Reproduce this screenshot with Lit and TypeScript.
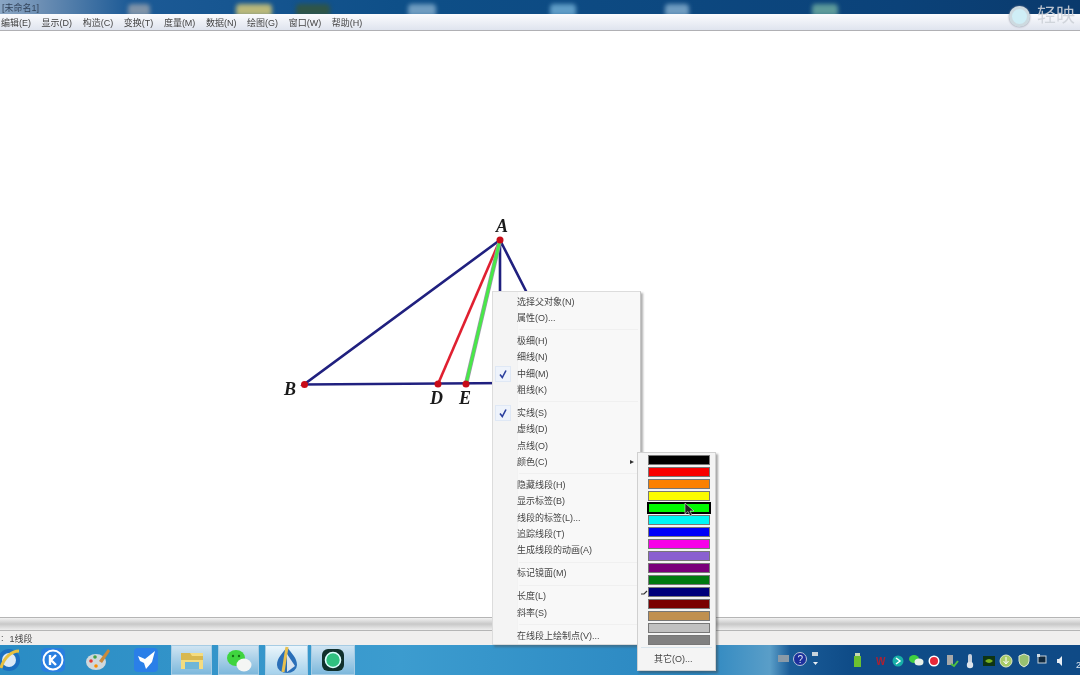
import { LitElement, html, css, svg } from "lit";
import { customElement } from "lit/decorators.js";

const MENUS = ["编辑(E)", "显示(D)", "构造(C)", "变换(T)", "度量(M)", "数据(N)", "绘图(G)", "窗口(W)", "帮助(H)"];

// groups of the context menu, a separator goes between groups
const GROUPS = [
  [{ t: "选择父对象(N)" }, { t: "属性(O)..." }],
  [{ t: "极细(H)" }, { t: "细线(N)" }, { t: "中细(M)", check: true }, { t: "粗线(K)" }],
  [{ t: "实线(S)", check: true }, { t: "虚线(D)" }, { t: "点线(O)" }, { t: "颜色(C)", sub: true }],
  [{ t: "隐藏线段(H)" }, { t: "显示标签(B)" }, { t: "线段的标签(L)..." }, { t: "追踪线段(T)" }, { t: "生成线段的动画(A)" }],
  [{ t: "标记镜面(M)" }],
  [{ t: "长度(L)" }, { t: "斜率(S)" }],
  [{ t: "在线段上绘制点(V)..." }],
];

const COLORS = ["#000000", "#f80000", "#fb8000", "#fbfb00", "#00fb00", "#00f6f6", "#0000f8", "#f800e8", "#8a60d0", "#7a007a", "#007a10", "#00007a", "#7a0000", "#c09050", "#c0c0c0", "#808080"];

const BLOBS = [
  [128, 22, "#7f93a8"],
  [236, 36, "#b9b87a"],
  [296, 34, "#2f5548"],
  [408, 28, "#6f9cc0"],
  [550, 26, "#5f9cc6"],
  [665, 24, "#6f9cc0"],
  [812, 26, "#5d9a9a"],
];

const TASK_ICONS = [
  { x: -4, icon: svg`<circle cx="13" cy="13" r="11" fill="#1c6fc0"/><rect x="6" y="6" width="14" height="14" rx="7" fill="#fff" fill-opacity=".85"/><path d="M5 21C8 10 16 4 23 4" fill="none" stroke="#e8c040" stroke-width="3"/>` },
  { x: 40, icon: svg`<rect x="1" y="1" width="24" height="24" rx="5" fill="#2a7fe0"/><circle cx="13" cy="13" r="9.5" fill="none" stroke="#fff" stroke-width="2"/><path d="M10 8v10M16 8l-5 5 5 5" fill="none" stroke="#fff" stroke-width="2.4"/>` },
  { x: 85, icon: svg`<ellipse cx="11" cy="15" rx="10" ry="8" fill="#cfd8dc"/><circle cx="6" cy="14" r="1.8" fill="#e53935"/><circle cx="10" cy="10" r="1.8" fill="#43a047"/><circle cx="11" cy="19" r="1.8" fill="#fb8c00"/><path d="M14 14L23 2l2 2-8 12z" fill="#c98a3c"/>` },
  { x: 133, icon: svg`<rect x="1" y="1" width="24" height="24" rx="4" fill="#2a7fe8"/><path d="M5 9l7 3 10-8-3 11-6 7-2-6-4-2z" fill="#fff"/>` },
];

@customElement("app-root")
export class AppRoot extends LitElement {
  static styles = css`
    :host {
      display: block;
      width: 1080px;
      height: 675px;
      position: relative;
      overflow: hidden;
      background: #fff;
      font-family: "Liberation Sans", "Noto Sans CJK SC", sans-serif;
      font-size: 9px;
      color: #444;
    }
    .page { display: flex; flex-direction: column; height: 100%; filter: blur(0.4px); }
    .title {
      height: 14px;
      flex: none;
      background: linear-gradient(90deg, #8aa6c4 0, #6d8fb4 40px, #1c5a96 130px, #0e4f88 400px, #0b4279 900px, #0a3a6c 100%);
      display: flex;
      align-items: center;
      padding-left: 2px;
      color: #33445a;
      position: relative;
      overflow: hidden;
    }
    .blob { position: absolute; top: 4px; height: 12px; border-radius: 4px 4px 0 0; filter: blur(2px); }
    .menubar {
      height: 17px;
      flex: none;
      display: flex;
      align-items: center;
      padding-left: 1px;
      gap: 10.6px;
      background: linear-gradient(#fbfcfe, #dfe4ee);
      border-bottom: 1px solid #b0b0b4;
      box-sizing: border-box;
    }
    .canvas { flex: 1; position: relative; background: #fff; }
    .canvas svg { position: absolute; inset: 0; }
    .lbl { font: italic bold 18px "Liberation Serif", serif; fill: #1a1a1a; }
    .scroll {
      height: 14px;
      flex: none;
      box-sizing: border-box;
      border-top: 1px solid #b5b5b5;
      border-bottom: 1px solid #b5b5b5;
      background: linear-gradient(#f2f2f2, #c8c8c8 50%, #eeeeee);
    }
    .status {
      height: 14px;
      flex: none;
      background: #f0efee;
      display: flex;
      align-items: center;
      gap: 6px;
      padding-left: 1px;
    }
    .taskbar {
      height: 30px;
      flex: none;
      display: flex;
      align-items: center;
      background: linear-gradient(90deg, #2a8cc4 0, #3c9ccf 400px, #2a86c0 700px, #5a9ec8 770px, #1a5c98 790px, #0f4c88 850px, #0f4a86 100%);
      position: relative;
    }
    .task { width: 44px; height: 30px; display: flex; align-items: center; justify-content: center; flex: none; box-sizing: border-box; }
    .task.on {
      background: linear-gradient(#cfe4f2, #7db8dc);
      border: 1px solid #a6cce4;
      width: 41px;
      margin-right: 6px;
    }
    .task.on.lit { background: linear-gradient(#eaf5fb, #a6d2ec); width: 43px; margin-right: 3px; }
    .task.on.wide { width: 44px; }
    .pin { position: absolute; top: 2px; }
    .spacer { width: 171px; flex: none; }
    .tray { position: absolute; top: 0; left: 0; width: 1080px; height: 30px; }
    .tray text { font: 10px "Liberation Sans", sans-serif; fill: #e0e8f0; }
    .tray .w { fill: #b02030; font-weight: bold; }
    .tray .clock { font-size: 9px; }

    .ctx {
      position: absolute;
      left: 492px;
      top: 291px;
      width: 149px;
      height: 354px;
      box-sizing: border-box;
      padding-top: 1.5px;
      background: linear-gradient(90deg, #f4f4f4 0, #f4f4f4 24px, #ececec 24px, #f8f8f8 25px);
      border: 1px solid #dcdcdc;
      border-right-color: #c4c4c4;
      box-shadow: 2px 2px 2px rgba(80, 80, 80, 0.45);
      filter: blur(0.45px);
    }
    .item {
      height: 16.4px;
      line-height: 16.4px;
      padding-left: 24px;
      position: relative;
      white-space: nowrap;
    }
    .check {
      position: absolute;
      left: 2px;
      top: 0;
      width: 16px;
      height: 16px;
      background: #eef3fb;
      border: 1px solid #dfe8f5;
      box-sizing: border-box;
    }
    .arrow {
      position: absolute;
      right: 6px;
      top: 6px;
      border-left: 4px solid #333;
      border-top: 2.5px solid transparent;
      border-bottom: 2.5px solid transparent;
    }
    .sep { height: 1px; background: #f0f0f0; margin: 3px 2px 2.5px 26px; }
    .colors {
      position: absolute;
      left: 637px;
      top: 452px;
      width: 79px;
      height: 219px;
      box-sizing: border-box;
      background: #f4f4f4;
      border: 1px solid #d0d0d0;
      box-shadow: 2px 2px 2px rgba(60, 60, 60, 0.45);
      padding: 2px 5px 0 10px;
      display: flex;
      flex-direction: column;
      gap: 2px;
      filter: blur(0.45px);
    }
    .sw { height: 10px; flex: none; box-sizing: border-box; border: 1px solid #777; }
    .sw.sel { border: 2px solid #000; margin: -1px -1px; height: 12px; }
    .other {
      margin: 0 -2px 0 -7px;
      border-top: 1px solid #d8e4ec;
      padding: 4px 0 0 13px;
    }
    .cursor { position: absolute; left: 684px; top: 502px; }
    .tail { position: absolute; left: 641px; top: 590px; }
    .mark {
      position: absolute;
      left: 1009px;
      top: 4px;
      display: flex;
      align-items: center;
      gap: 7px;
      color: rgba(205, 210, 216, 0.9);
      font-size: 19px;
      line-height: 24px;
      filter: blur(0.5px);
    }
    .ring {
      width: 15px;
      height: 15px;
      border-radius: 50%;
      background: #cfeef6;
      border: 3px solid rgba(205, 214, 220, 0.85);
      box-shadow: 0 0 2px #889;
    }
  `;

  render() {
    return html`
      <div class="page">
        <div class="title">
          <span>[未命名1]</span>
          ${BLOBS.map((b) => html`<i class="blob" style="left:${b[0]}px;width:${b[1]}px;background:${b[2]}"></i>`)}
        </div>
        <div class="menubar">${MENUS.map((m) => html`<span>${m}</span>`)}</div>
        <div class="canvas">
          <svg width="1080" height="586" viewBox="0 31 1080 586">
            <g stroke="#20207f" stroke-width="2.6" fill="none">
              <path d="M500 240L304 384.5L520 383"/>
              <path d="M500 240V300M500 240L528 295"/>
            </g>
            <path d="M500 240L438 384" stroke="#e02030" stroke-width="2.6"/>
            <path d="M500 240L466 384" stroke="#9a9aa8" stroke-width="4.4"/>
            <path d="M500 240L466 384" stroke="#48e848" stroke-width="3"/>
            <g fill="#c80c18">
              <circle cx="500" cy="240" r="3.5"/><circle cx="304.500" cy="384.500" r="3.500"/>
              <circle cx="438" cy="384" r="3.500"/><circle cx="466" cy="384" r="3.500"/>
            </g>
            <text class="lbl" x="496" y="232">A</text>
            <text class="lbl" x="284" y="395">B</text>
            <text class="lbl" x="430" y="404">D</text>
            <text class="lbl" x="459" y="404">E</text>
          </svg>
        </div>
        <div class="scroll"></div>
        <div class="status"><span>:</span><span>1线段</span></div>
        <div class="taskbar">
          ${TASK_ICONS.map((t) => html`<svg class="pin" style="left:${t.x}px" width="26" height="26">${t.icon}</svg>`)}
          <div class="spacer"></div>
          <div class="task on">
            <svg width="26" height="26"><path d="M2 6h22v16H2z" fill="#f4dc80"/><path d="M2 6h9l2 3h11v4H2z" fill="#d8b850"/><rect x="6" y="15" width="14" height="7" fill="#6fb6d8"/></svg>
          </div>
          <div class="task on">
            <svg width="26" height="26"><ellipse cx="10" cy="11" rx="9" ry="8" fill="#3fd43f"/><ellipse cx="18" cy="18" rx="7.500" ry="6.500" fill="#f4f6f4"/><circle cx="7" cy="9" r="1.200" fill="#167016"/><circle cx="13" cy="9" r="1.200" fill="#167016"/></svg>
          </div>
          <div class="task on lit">
            <svg width="24" height="28"><path d="M12 1C7 8 2 12 2 19a10 8 0 0 0 20 0C22 12 17 8 12 1z" fill="#2a6fb8"/><path d="M12 1L8 26" stroke="#e8c050" stroke-width="3"/><path d="M12 8l8 12-8 6z" fill="#d8e4f0"/></svg>
          </div>
          <div class="task on wide">
            <svg width="26" height="26"><rect x="2" y="2" width="22" height="22" rx="6" fill="#10302c"/><circle cx="13" cy="13" r="7.500" fill="#30c080" stroke="#dff" stroke-width="1.600"/></svg>
          </div>
          <svg class="tray" viewBox="0 645 1080 30">
            <rect x="778" y="655" width="11" height="7" fill="#8a9aa8"/>
            <circle cx="800" cy="659" r="6.500" fill="#1c2f9c" stroke="#b8c4d8"/>
            <text x="797.500" y="662.500">?</text>
            <rect x="812" y="652" width="6" height="4" fill="#c8d4dc"/>
            <path d="M813 662h5l-2.500 3z" fill="#e8eef4"/>
            <rect x="854" y="656" width="7" height="11" fill="#6cc030"/>
            <rect x="855" y="653" width="5" height="3" fill="#c8d8b0"/>
            <text class="w" x="876" y="665">W</text>
            <circle cx="898" cy="661" r="5.500" fill="#18b0a8"/>
            <path d="M896 658l4 3-4 3" stroke="#fff" fill="none" stroke-width="1.500"/>
            <ellipse cx="914" cy="659" rx="5" ry="4" fill="#40d040"/><ellipse cx="919" cy="662" rx="4.500" ry="3.500" fill="#e8f0e8"/>
            <circle cx="934" cy="661" r="5.500" fill="#fff"/><circle cx="934" cy="661" r="4" fill="#e82838"/>
            <rect x="947" y="655" width="6" height="10" fill="#a8a8a8"/><path d="M951 664l3 2 4-5" stroke="#50c040" stroke-width="2" fill="none"/>
            <rect x="968" y="654" width="4" height="11" rx="2" fill="#c8d0dc"/><circle cx="970" cy="665" r="3.200" fill="#dde4ec"/>
            <rect x="983" y="656" width="12" height="10" fill="#0e3414"/><path d="M985 661q4-4 8 0q-4 4-8 0z" fill="#78b020"/>
            <circle cx="1006" cy="661" r="6" fill="#a8cc68" stroke="#dfe8c8"/><path d="M1006 657v6M1003.500 661l2.500 3 2.500-3" stroke="#fff" fill="none"/>
            <path d="M1019 656l5-2 5 2v5q0 4-5 6q-5-2-5-6z" fill="#98c070" stroke="#e0e8d8"/>
            <rect x="1038" y="656" width="8" height="7" fill="#10283c" stroke="#c8d4dc"/><rect x="1037" y="654" width="3" height="3" fill="#d0dce4"/>
            <path d="M1057 659h2l3-3v10l-3-3h-2z" fill="#e8eef4"/>
            <text class="clock" x="1076" y="668">2</text>
          </svg>
        </div>
      </div>
      <div class="mark"><span class="ring"></span><span>轻映</span></div>

      <div class="ctx">
        ${GROUPS.map(
          (g, i) => html`
            ${i ? html`<div class="sep"></div>` : ""}
            ${g.map(
              (it: any) => html`<div class="item">
                ${it.check
                  ? html`<span class="check"><svg width="14" height="14"><path d="M4 7.500l2.300 3L10 3.500" fill="none" stroke="#2b3f9e" stroke-width="1.600"/></svg></span>`
                  : ""}${it.t}${it.sub ? html`<span class="arrow"></span>` : ""}
              </div>`
            )}
          `
        )}
      </div>
      <div class="colors">
        ${COLORS.map((c, i) => html`<div class="sw ${i === 4 ? "sel" : ""}" style="background:${c}"></div>`)}
        <div class="other">其它(O)...</div>
      </div>
      <svg class="cursor" width="11" height="16" viewBox="0 0 11 16">
        <path d="M1 1v11l3-2.500 2 4.500 2-1-2-4h4z" fill="#222" stroke="#ddd" stroke-width=".6"/>
      </svg>
      <svg class="tail" width="8" height="6"><path d="M0 4h3l3-3" fill="none" stroke="#333" stroke-width="1.200"/></svg>
    `;
  }
}
